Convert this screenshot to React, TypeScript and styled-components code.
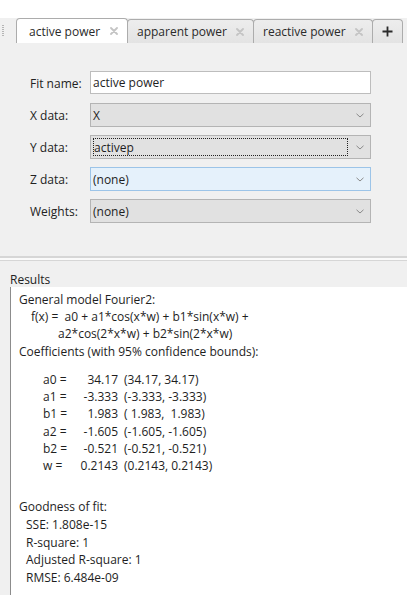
import React from "react";
import styled, { createGlobalStyle, css } from "styled-components";

const Global = createGlobalStyle`
  html, body { margin: 0; padding: 0; background: #ffffff; }
  body { font-family: "Open Sans", "Noto Sans", sans-serif; color: #1e1e1e; }
`;

const Root = styled.div`
  width: 411px;
  height: 595px;
  overflow: hidden;
  background: #ffffff;
  display: flex;
  flex-direction: column;
`;

const TopGap = styled.div`
  height: 18px;
  flex: none;
`;

const TabStrip = styled.div`
  width: 407px;
  height: 25px;
  flex: none;
  display: flex;
  align-items: flex-end;
  background: #f0f0f0;
`;

const Grip = styled.div`
  width: 16px;
  height: 25px;
  display: flex;
  align-items: center;
  padding-left: 2px;
  box-sizing: border-box;
  &::before {
    content: "";
    width: 2px;
    height: 12px;
    background-image: linear-gradient(#b5b5b5 50%, transparent 50%);
    background-size: 2px 2px;
  }
`;

const Tab = styled.div<{ $active?: boolean; $w: number }>`
  box-sizing: border-box;
  width: ${(p) => p.$w}px;
  height: ${(p) => (p.$active ? 25 : 24)}px;
  display: flex;
  align-items: center;
  justify-content: space-between;
  padding: 0 9px 0 ${(p) => (p.$active ? 12 : 9)}px;
  border: 1px solid #acacac;
  border-bottom: none;
  border-radius: 4px 4px 0 0;
  margin-right: -1px;
  font-size: 12px;
  color: #2a2a2a;
  ${(p) =>
    p.$active
      ? css`
          background: #ffffff;
          position: relative;
          z-index: 1;
        `
      : css`
          background: linear-gradient(#ededed, #e3e3e3);
        `}
`;

const PlusTab = styled(Tab)`
  justify-content: center;
  padding: 0;
`;

const Close = () => (
  <svg width="8" height="8" viewBox="0 0 8 8">
    <path d="M1 1 L7 7 M7 1 L1 7" stroke="#c4c4c4" strokeWidth="1.8" strokeLinecap="round" />
  </svg>
);

const Plus = () => (
  <svg width="11" height="11" viewBox="0 0 11 11">
    <path d="M5.5 0.5 V10.5 M0.5 5.5 H10.5" stroke="#2b2b2b" strokeWidth="1.8" />
  </svg>
);

const Panel = styled.div`
  width: 407px;
  height: 213px;
  flex: none;
  box-sizing: border-box;
  background: #f0f0f0;
  padding: 28px 0 0 30px;
  display: grid;
  grid-template-columns: 60px 281px;
  grid-auto-rows: 24px;
  row-gap: 8px;
  align-content: start;
  align-items: center;
  font-size: 12px;
`;

const Label = styled.div`
  color: #222222;
  white-space: nowrap;
`;

const TextField = styled.div`
  box-sizing: border-box;
  height: 23px;
  align-self: start;
  background: #ffffff;
  border: 1px solid #bdbdbd;
  display: flex;
  align-items: center;
  padding-left: 2px;
  color: #1e1e1e;
`;

const Select = styled.div<{ $hover?: boolean }>`
  box-sizing: border-box;
  height: 24px;
  display: flex;
  align-items: center;
  justify-content: space-between;
  padding: 0 6px 0 2px;
  border: 1px solid ${(p) => (p.$hover ? "#9cc4e8" : "#b4b4b4")};
  background: ${(p) => (p.$hover ? "#e5f1fb" : "#e1e1e1")};
  color: #1e1e1e;
`;

const Focus = styled.span`
  flex: 1;
  align-self: stretch;
  margin: 2px 8px 2px 0;
  border: 1px dotted #222;
  display: flex;
  align-items: center;
  box-sizing: border-box;
`;

const Chevron = () => (
  <svg width="8" height="5" viewBox="0 0 8 5">
    <path d="M0.5 0.8 L4 4 L7.5 0.8" fill="none" stroke="#8a8a8a" strokeWidth="1" />
  </svg>
);

const Divider = styled.div`
  width: 407px;
  height: 5px;
  flex: none;
  box-sizing: border-box;
  border-top: 2px solid #d6d6d6;
  border-bottom: 1px solid #d6d6d6;
  background: #fafafa;
`;

const ResultsHead = styled.div`
  width: 407px;
  height: 26px;
  flex: none;
  box-sizing: border-box;
  background: #f0f0f0;
  padding: 12px 0 0 10px;
  font-size: 12px;
  line-height: 14px;
  color: #222;
`;

const ResultsBody = styled.div`
  width: 407px;
  flex: 1;
  background: #f0f0f0;
  padding-left: 10px;
  box-sizing: border-box;
  display: flex;
`;

const TextBox = styled.div`
  flex: 1;
  background: #ffffff;
  border-left: 1px solid #8c8c8c;
  padding: 4px 0 0 8px;
  font-size: 12px;
  line-height: 17px;
  color: #1e1e1e;
`;

const Line = styled.div<{ $indent?: number; $top?: number; $lh?: number }>`
  padding-left: ${(p) => p.$indent ?? 0}px;
  margin-top: ${(p) => p.$top ?? 0}px;
  line-height: ${(p) => p.$lh ?? 17}px;
  white-space: pre;
`;

const CoefGrid = styled.div`
  margin-top: 11px;
  padding-left: 24px;
  display: grid;
  grid-template-columns: 36px 39px auto;
  grid-auto-rows: 17.2px;
  align-items: center;
  white-space: pre;
`;

const CoefValue = styled.span`
  text-align: right;
`;

const CoefBounds = styled.span`
  padding-left: 6px;
`;

const coefs = [
  ["a0 =", "34.17", "(34.17, 34.17)"],
  ["a1 =", "-3.333", "(-3.333, -3.333)"],
  ["b1 =", "1.983", "( 1.983,  1.983)"],
  ["a2 =", "-1.605", "(-1.605, -1.605)"],
  ["b2 =", "-0.521", "(-0.521, -0.521)"],
  ["w =", "0.2143", "(0.2143, 0.2143)"],
];

const fit = ["SSE: 1.808e-15", "R-square: 1", "Adjusted R-square: 1", "RMSE: 6.484e-09"];

export default function App() {
  return (
    <>
      <Global />
      <Root>
        <TopGap />
        <TabStrip>
          <Grip />
          <Tab $active $w={112}>
            <span>active power</span>
            <Close />
          </Tab>
          <Tab $w={127}>
            <span>apparent power</span>
            <Close />
          </Tab>
          <Tab $w={120}>
            <span>reactive power</span>
            <Close />
          </Tab>
          <PlusTab $w={31}>
            <Plus />
          </PlusTab>
        </TabStrip>
        <Panel>
          <Label>Fit name:</Label>
          <TextField>active power</TextField>
          <Label>X data:</Label>
          <Select>
            <span>X</span>
            <Chevron />
          </Select>
          <Label>Y data:</Label>
          <Select>
            <Focus>activep</Focus>
            <Chevron />
          </Select>
          <Label>Z data:</Label>
          <Select $hover>
            <span>(none)</span>
            <Chevron />
          </Select>
          <Label>Weights:</Label>
          <Select>
            <span>(none)</span>
            <Chevron />
          </Select>
        </Panel>
        <Divider />
        <ResultsHead>Results</ResultsHead>
        <ResultsBody>
          <TextBox>
            <Line>General model Fourier2:</Line>
            <Line $indent={12}>f(x) =  a0 + a1*cos(x*w) + b1*sin(x*w) +</Line>
            <Line $indent={39}>a2*cos(2*x*w) + b2*sin(2*x*w)</Line>
            <Line $top={1}>Coefficients (with 95% confidence bounds):</Line>
            <CoefGrid>
              {coefs.map(([l, v, b]) => (
                <React.Fragment key={l}>
                  <span>{l}</span>
                  <CoefValue>{v}</CoefValue>
                  <CoefBounds>{b}</CoefBounds>
                </React.Fragment>
              ))}
            </CoefGrid>
            <Line $top={24} $lh={17.7}>Goodness of fit:</Line>
            {fit.map((t) => (
              <Line key={t} $indent={7} $lh={17.7}>
                {t}
              </Line>
            ))}
          </TextBox>
        </ResultsBody>
      </Root>
    </>
  );
}
